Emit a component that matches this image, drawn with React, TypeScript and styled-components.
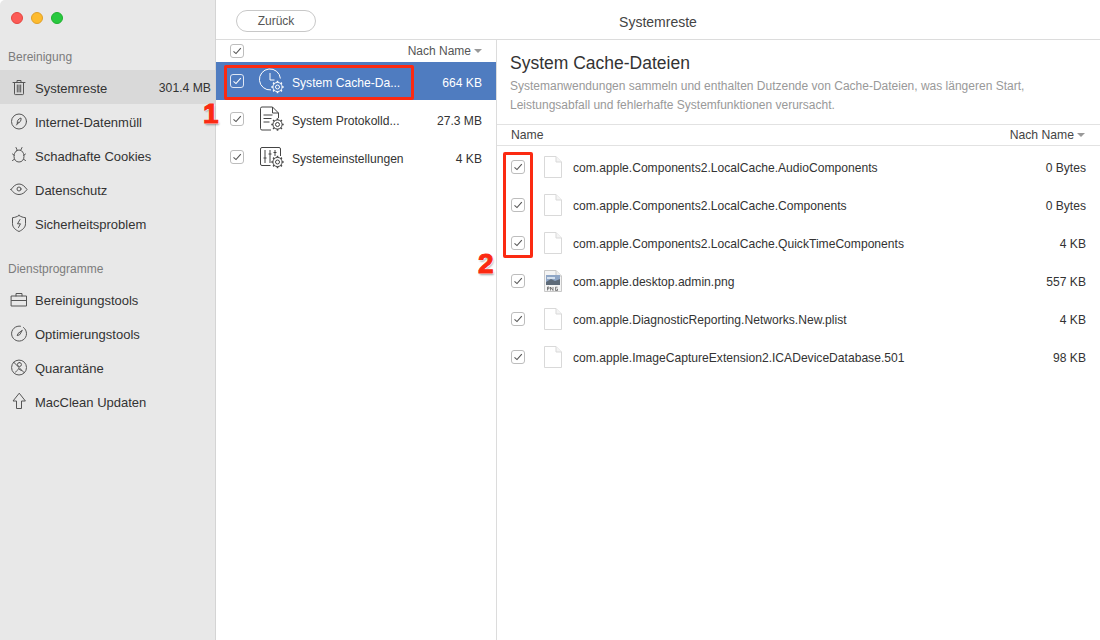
import React from 'react';
import styled, { createGlobalStyle } from 'styled-components';

const GlobalStyle = createGlobalStyle`
  html, body {
    margin: 0;
    padding: 0;
    background: #fff;
  }
  body {
    font-family: "Liberation Sans", Arial, sans-serif;
    color: #333;
  }
  * { box-sizing: border-box; }
`;

const Win = styled.div`
  position: relative;
  display: flex;
  width: 1100px;
  height: 640px;
  overflow: hidden;
  background: #fff;
  border-radius: 5px 5px 0 0;
`;

const Sidebar = styled.aside`
  width: 216px;
  flex-shrink: 0;
  background: #e8e8e8;
  border-right: 1px solid #d4d4d4;
  padding-top: 12px;
`;

const Lights = styled.div`
  display: flex;
  gap: 8px;
  padding-left: 11px;
  height: 33px;
`;

const Light = styled.span<{ $c: string; $b: string }>`
  width: 12px;
  height: 12px;
  border-radius: 50%;
  background: ${(p) => p.$c};
  border: 1px solid ${(p) => p.$b};
`;

const GroupLabel = styled.div<{ $top: number }>`
  margin-top: ${(p) => p.$top}px;
  height: 25px;
  padding-left: 8px;
  font-size: 12px;
  line-height: 25px;
  color: #7c7c7c;
`;

const NavItem = styled.div<{ $active?: boolean }>`
  display: flex;
  align-items: center;
  height: 34px;
  padding: 2px 4px 0 10px;
  font-size: 13px;
  color: #333;
  background: ${(p) => (p.$active ? '#d9d9d9' : 'transparent')};
  svg { width: 19px; height: 19px; flex-shrink: 0; margin: -2px 6px 0 0; }
`;

const NavSize = styled.span`
  margin-left: auto;
  font-size: 12.2px;
`;

const Main = styled.main`
  flex: 1;
  display: flex;
  flex-direction: column;
  min-width: 0;
`;

const TopBar = styled.header`
  position: relative;
  height: 40px;
  flex-shrink: 0;
  border-bottom: 1px solid #dcdcdc;
  display: flex;
  align-items: center;
  justify-content: center;
  padding-top: 5px;
  font-size: 14px;
  color: #444;
`;

const BackButton = styled.button`
  position: absolute;
  left: 20px;
  top: 10px;
  width: 80px;
  height: 22px;
  border: 1px solid #c8c8c8;
  border-radius: 11px;
  background: #fff;
  font: inherit;
  font-size: 12px;
  color: #555;
  padding: 0;
`;

const Columns = styled.div`
  flex: 1;
  display: flex;
  min-height: 0;
`;

const ListCol = styled.section`
  width: 281px;
  flex-shrink: 0;
  border-right: 1px solid #dcdcdc;
`;

const ListHead = styled.div`
  display: flex;
  align-items: center;
  height: 22px;
  padding: 0 14px;
  font-size: 12px;
  color: #555;
`;

const SortLabel = styled.span`
  margin-left: auto;
  display: flex;
  align-items: center;
  gap: 3px;
  &::after {
    content: '';
    border-left: 4px solid transparent;
    border-right: 4px solid transparent;
    border-top: 4px solid #999;
  }
`;

const Box = styled.span<{ $onBlue?: boolean }>`
  width: 14px;
  height: 14px;
  flex-shrink: 0;
  display: flex;
  align-items: center;
  justify-content: center;
  border: 1px solid ${(p) => (p.$onBlue ? '#dfe7f4' : '#bdbdbd')};
  border-radius: 3px;
  background: ${(p) => (p.$onBlue ? 'transparent' : '#fff')};
  color: ${(p) => (p.$onBlue ? '#fff' : '#555')};
  svg { width: 10px; height: 10px; }
`;

const GroupRow = styled.div<{ $sel?: boolean }>`
  display: flex;
  align-items: center;
  height: 38px;
  padding: 0 14px;
  font-size: 12.1px;
  color: ${(p) => (p.$sel ? '#fff' : '#333')};
  background: ${(p) => (p.$sel ? '#4f7cc0' : 'transparent')};
  > svg { width: 26px; height: 28px; margin-left: 15px; margin-right: 7px; flex-shrink: 0; }
`;

const GroupName = styled.span`
  margin-top: 3px;
  white-space: nowrap;
`;

const GroupSize = styled.span`
  margin: 3px 0 0 auto;
`;

const Detail = styled.section`
  flex: 1;
  min-width: 0;
  display: flex;
  flex-direction: column;
`;

const DetailIntro = styled.div`
  height: 85px;
  flex-shrink: 0;
  padding: 13px 14px 0 13px;
  border-bottom: 1px solid #e2e2e2;
`;

const DetailTitle = styled.h2`
  margin: 0;
  font-size: 17.5px;
  font-weight: normal;
  line-height: 20px;
  color: #333;
`;

const DetailText = styled.p`
  margin: 4px 0 0;
  font-size: 12px;
  line-height: 19px;
  color: #999;
`;

const TableHead = styled.div`
  display: flex;
  align-items: center;
  justify-content: space-between;
  height: 21px;
  flex-shrink: 0;
  padding: 0 15px 0 14px;
  border-bottom: 1px solid #e2e2e2;
  font-size: 12.2px;
  color: #444;
`;

const FileList = styled.div`
  padding-top: 2px;
`;

const FileRow = styled.div`
  display: flex;
  align-items: center;
  height: 38px;
  padding: 0 14px;
  font-size: 12.1px;
  color: #333;
`;

const FileIconWrap = styled.span`
  width: 18px;
  height: 22px;
  margin: 0 11px 0 19px;
  flex-shrink: 0;
  svg { width: 18px; height: 22px; display: block; }
`;

const FileName = styled.span`
  margin-top: 2px;
`;

const FileSize = styled.span`
  margin: 2px 0 0 auto;
`;

const Marker = styled.div<{ $l: number; $t: number; $w: number; $h: number }>`
  position: absolute;
  left: ${(p) => p.$l}px;
  top: ${(p) => p.$t}px;
  width: ${(p) => p.$w}px;
  height: ${(p) => p.$h}px;
  border: 3px solid #fb2a12;
  border-radius: 2px;
`;

const Callout = styled.span<{ $l: number; $t: number }>`
  position: absolute;
  left: ${(p) => p.$l}px;
  top: ${(p) => p.$t}px;
  font-size: 28px;
  line-height: 28px;
  font-weight: bold;
  color: #fb2a12;
  -webkit-text-stroke: 1px #fb2a12;
  text-shadow: 0 0 2px #fff, 1px 1px 1px #fff, 1px 2px 2px rgba(0, 0, 0, 0.4);
`;

const Check = () => (
  <svg viewBox="0 0 10 10" fill="none" stroke="currentColor" strokeWidth="1.1">
    <path d="M1.5 5.4 4 7.6 8.800 2.200" />
  </svg>
);

const Icon = ({ children }: { children: React.ReactNode }) => (
  <svg viewBox="0.5 0 19 19" fill="none" stroke="#555" strokeWidth="1" strokeLinecap="round" strokeLinejoin="round">
    {children}
  </svg>
);

const TrashIcon = () => (
  <Icon>
    <path d="M3.500 4.500h12M7.500 4.500V2.500h4v2M5 4.500v11.300a.8.800 0 0 0 .8.800h7.400a.8.800 0 0 0 .8-.8V4.500M7.800 7v7M9.500 7v7M11.200 7v7" />
  </Icon>
);
const LeafIcon = () => (
  <Icon>
    <circle cx="9.500" cy="9.500" r="7.500" />
    <path d="M7.800 11.500c-.4-2.700.7-4.500 3.700-5.500.4 2.800-.8 4.700-3.700 5.500zM7 13l2-3" />
  </Icon>
);
const BugIcon = () => (
  <Icon>
    <path d="M6.500 1.500l1.300 2.800M12.500 1.500l-1.300 2.800M7 4.800c1.700-1 3.300-1 5 0 1.800 1.500 2.500 3.500 2.500 5.500 0 3.500-2 5.700-5 5.700s-5-2.200-5-5.700c0-2 .7-4 2.500-5.500zM3 8l1.800 1.300M16 8l-1.800 1.300M3 14.500l2-1.300M16 14.500l-2-1.300" />
  </Icon>
);
const EyeIcon = () => (
  <Icon>
    <path d="M1.500 9.500C4 6 6.500 4 9.500 4s5.500 2 8 5.500c-2.500 3.500-5 5-8 5s-5.500-1.500-8-5z" />
    <circle cx="9.500" cy="9" r="2" />
  </Icon>
);
const ShieldIcon = () => (
  <Icon>
    <path d="M9.500 1.500c2 1.200 4 2 6.500 2.200v6c0 3.500-2.500 6-6.500 7.800C5.500 15.700 3 13.200 3 9.700v-6C5.500 3.500 7.500 2.700 9.500 1.500z" />
    <path d="M10.500 5.500 8 9.800h3l-2 3.700" />
  </Icon>
);
const CaseIcon = () => (
  <Icon>
    <path d="M2 6h15v10H2zM2 10.500h15M6.500 6V3.500h6V6" />
  </Icon>
);
const GaugeIcon = () => (
  <Icon>
    <path d="M14 3.500A7.500 7.500 0 1 1 11 2.200M12.500 6.500l-4 3-.8 2.200 2.200-.9z" />
  </Icon>
);
const QuarantineIcon = () => (
  <Icon>
    <path d="M4.200 4.200a7.500 7.500 0 0 1 10.600 0 7.500 7.500 0 0 1 0 10.600 7.500 7.500 0 0 1-10.600 0 7.500 7.500 0 0 1 0-10.600zM4.200 4.200l10.600 10.600" />
    <path d="M10 4.500a2 2 0 1 1-.1 4 2 2 0 0 1 .1-4zM6 14c1.500-1 2.500-2 3-3.500.8 1 1.800 1.700 3 2" />
  </Icon>
);
const UpIcon = () => (
  <Icon>
    <path d="M9.500 1.500 3.500 9h3.500v7.500h5V9h3.500z" />
  </Icon>
);

// teeth are short radial strokes round the ring
const teeth = [0, 45, 90, 135, 180, 225, 270, 315];

const Gear = ({ c, cy }: { c: string; cy: number }) => (
  <g stroke={c} fill="none">
    <circle cx="18.500" cy={cy} r="4.600" strokeWidth="1" />
    <circle cx="18.500" cy={cy} r="2" strokeWidth="1" />
    {teeth.map((a) => (
      <path key={a} d={`M18.500 ${cy - 4.600}v-1.600`} strokeWidth="1.600" transform={`rotate(${a} 18.500 ${cy})`} />
    ))}
  </g>
);

const ClockGear = ({ c }: { c: string }) => (
  <svg viewBox="0 0 26 28" fill="none" stroke={c} strokeWidth="1">
    <path d="M12 22.900A10.500 10.500 0 1 1 21.400 11.500" />
    <path d="M11 6v7h4.500" />
    <Gear c={c} cy={20} />
  </svg>
);
const DocGear = ({ c }: { c: string }) => (
  <svg viewBox="0 0 26 28" fill="none" stroke={c} strokeWidth="1">
    <path d="M12 25H3a1.500 1.500 0 0 1-1.500-1.500V3.500A1.500 1.500 0 0 1 3 2h10.500l6 6v5M13.500 2v6h6M4.500 10h9M4.500 13.500h8M4.500 17h6" />
    <Gear c={c} cy={19.500} />
  </svg>
);
const SlidersGear = ({ c }: { c: string }) => (
  <svg viewBox="0 0 26 28" fill="none" stroke={c} strokeWidth="1">
    <path d="M11.500 22.500H3A1.500 1.500 0 0 1 1.500 21V6A1.500 1.500 0 0 1 3 4.500h17A1.500 1.500 0 0 1 21.500 6v7M6 7v13M11 7v13M16 7v6M4.500 15h3M9.500 11h3M14.500 9.500h3" />
    <Gear c={c} cy={19} />
  </svg>
);

const BlankFile = () => (
  <svg viewBox="0 0 18 22">
    <path d="M.5 .5H12l5.500 5.500v15.500H.5z" fill="#fff" stroke="#d9d9d9" />
    <path d="M12 .5V6h5.500" fill="#f4f4f4" stroke="#d9d9d9" />
  </svg>
);

const PngFile = () => (
  <svg viewBox="0 0 18 22">
    <path d="M.5 .5H12l5.500 5.500v15.500H.5z" fill="#f4f4f4" stroke="#c8c8c8" />
    <path d="M12 .5V6h5.500" fill="#eee" stroke="#c8c8c8" />
    <rect x="2" y="5" width="14" height="10" fill="#8fa6c6" />
    <path d="M2 12l5-3 4 2 5-2v6H2z" fill="#5d6a78" />
    <path d="M3 7h8v2H3z" fill="#d5e1ee" />
    <path d="M3.500 20.500V17h1.500v1.800H3.500M6.500 20.500V17L9 20.500V17M13.500 17.200h-2v3.300h2V19h-1" fill="none" stroke="#555" strokeWidth=".7" />
  </svg>
);

const nav1 = [
  { label: 'Systemreste', icon: <TrashIcon />, size: '301.4 MB', active: true },
  { label: 'Internet-Datenmüll', icon: <LeafIcon /> },
  { label: 'Schadhafte Cookies', icon: <BugIcon /> },
  { label: 'Datenschutz', icon: <EyeIcon /> },
  { label: 'Sicherheitsproblem', icon: <ShieldIcon /> },
];

const nav2 = [
  { label: 'Bereinigungstools', icon: <CaseIcon /> },
  { label: 'Optimierungstools', icon: <GaugeIcon /> },
  { label: 'Quarantäne', icon: <QuarantineIcon /> },
  { label: 'MacClean Updaten', icon: <UpIcon /> },
];

const files = [
  { name: 'com.apple.Components2.LocalCache.AudioComponents', size: '0 Bytes' },
  { name: 'com.apple.Components2.LocalCache.Components', size: '0 Bytes' },
  { name: 'com.apple.Components2.LocalCache.QuickTimeComponents', size: '4 KB' },
  { name: 'com.apple.desktop.admin.png', size: '557 KB', png: true },
  { name: 'com.apple.DiagnosticReporting.Networks.New.plist', size: '4 KB' },
  { name: 'com.apple.ImageCaptureExtension2.ICADeviceDatabase.501', size: '98 KB' },
];

const App: React.FC = () => (
  <Win>
    <GlobalStyle />
    <Sidebar>
      <Lights>
        <Light $c="#fc5b57" $b="#e5453f" />
        <Light $c="#fdbb2e" $b="#e0a028" />
        <Light $c="#28c93f" $b="#1fb02f" />
      </Lights>
      <GroupLabel $top={0}>Bereinigung</GroupLabel>
      {nav1.map((n) => (
        <NavItem key={n.label} $active={n.active}>
          {n.icon}
          {n.label}
          {n.size && <NavSize>{n.size}</NavSize>}
        </NavItem>
      ))}
      <GroupLabel $top={17}>Dienstprogramme</GroupLabel>
      {nav2.map((n) => (
        <NavItem key={n.label}>
          {n.icon}
          {n.label}
        </NavItem>
      ))}
    </Sidebar>
    <Main>
      <TopBar>
        <BackButton>Zurück</BackButton>
        Systemreste
      </TopBar>
      <Columns>
        <ListCol>
          <ListHead>
            <Box><Check /></Box>
            <SortLabel>Nach Name</SortLabel>
          </ListHead>
          <GroupRow $sel>
            <Box $onBlue><Check /></Box>
            <ClockGear c="#fff" />
            <GroupName>System Cache-Da...</GroupName>
            <GroupSize>664 KB</GroupSize>
          </GroupRow>
          <GroupRow>
            <Box><Check /></Box>
            <DocGear c="#444" />
            <GroupName>System Protokolld...</GroupName>
            <GroupSize>27.3 MB</GroupSize>
          </GroupRow>
          <GroupRow>
            <Box><Check /></Box>
            <SlidersGear c="#444" />
            <GroupName>Systemeinstellungen</GroupName>
            <GroupSize>4 KB</GroupSize>
          </GroupRow>
        </ListCol>
        <Detail>
          <DetailIntro>
            <DetailTitle>System Cache-Dateien</DetailTitle>
            <DetailText>
              Systemanwendungen sammeln und enthalten Dutzende von Cache-Dateien, was längeren Start,
              <br />
              Leistungsabfall und fehlerhafte Systemfunktionen verursacht.
            </DetailText>
          </DetailIntro>
          <TableHead>
            <span>Name</span>
            <SortLabel>Nach Name</SortLabel>
          </TableHead>
          <FileList>
            {files.map((f) => (
              <FileRow key={f.name}>
                <Box><Check /></Box>
                <FileIconWrap>{f.png ? <PngFile /> : <BlankFile />}</FileIconWrap>
                <FileName>{f.name}</FileName>
                <FileSize>{f.size}</FileSize>
              </FileRow>
            ))}
          </FileList>
        </Detail>
      </Columns>
    </Main>
    <Marker $l={224} $t={65} $w={190} $h={35} />
    <Marker $l={503} $t={152} $w={30} $h={106} />
    <Callout $l={203} $t={100}>1</Callout>
    <Callout $l={478} $t={250}>2</Callout>
  </Win>
);

export default App;
